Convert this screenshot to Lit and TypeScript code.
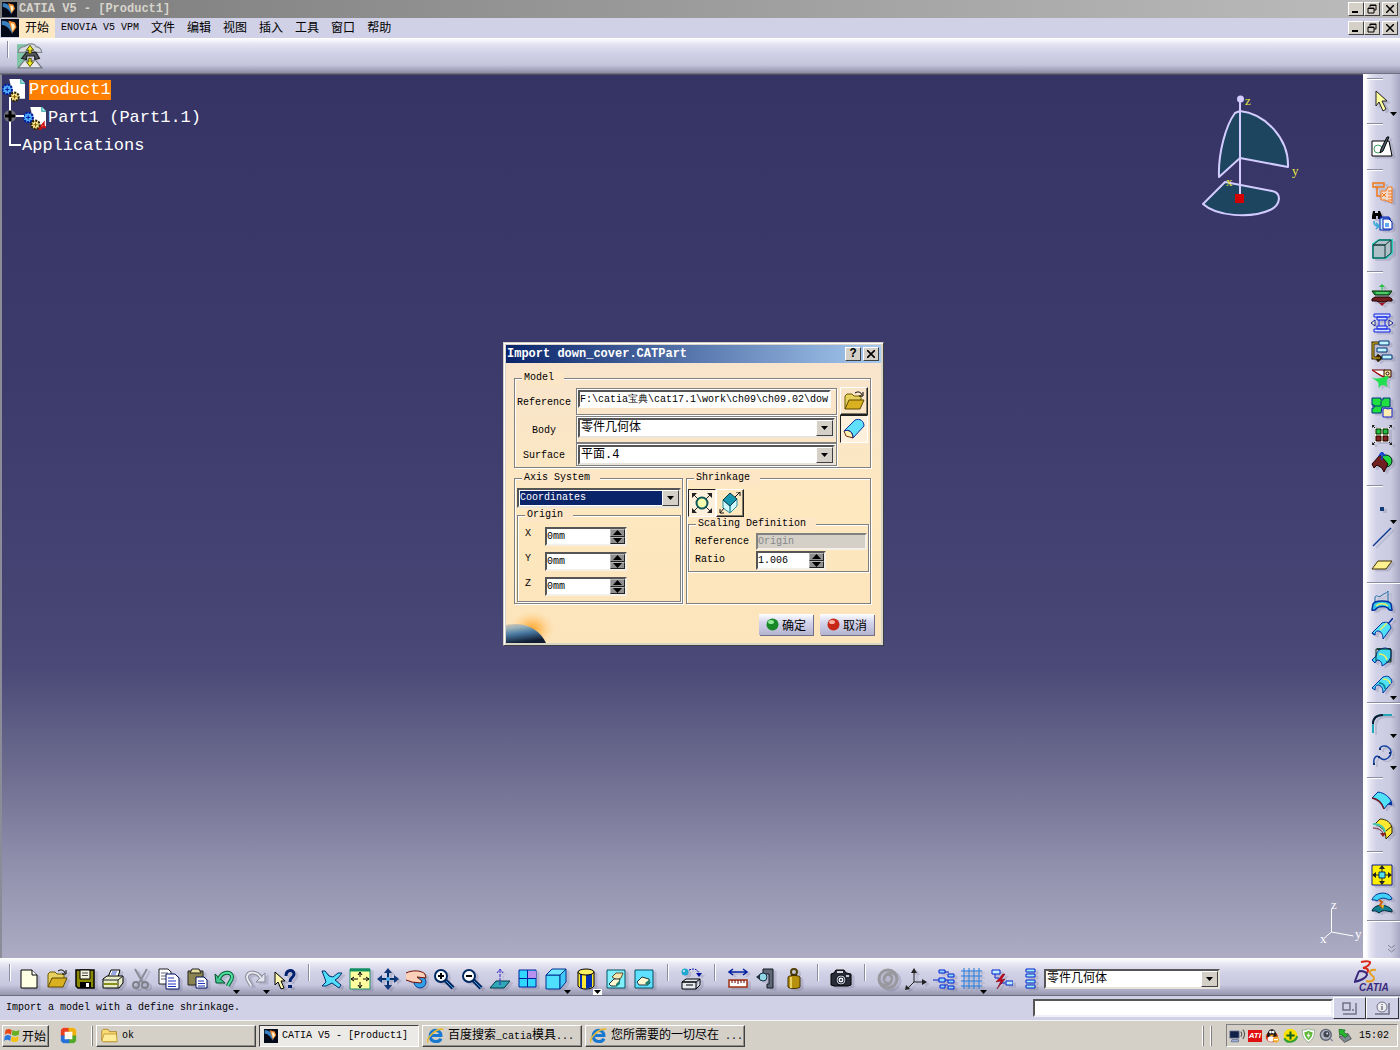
import { LitElement, html, svg, css } from "lit";
import { customElement, property } from "lit/decorators.js";

type Glyph = ReturnType<typeof svg>;

/* 22 x 22 pictograms, keyed by command */
const glyphs: Record<string, Glyph> = {
  page: svg`<path d="M3 2h11l5 5v13H3z" fill="#ffffe6" stroke="#000" stroke-width="1"/><path d="M14 2v5h5" fill="#fff" stroke="#000"/>`,
  open: svg`<path d="M2 19V6l2-2h5l2 2h7v4" fill="#e8d060" stroke="#6b5a00"/><path d="M2 19l4-9h15l-4 9z" fill="#d8b020" stroke="#5c4800"/><path d="M12 3c3-2 6-1 7 2m1-3v4h-4" fill="none" stroke="#000"/>`,
  save: svg`<path d="M2 2h18v18H4l-2-2z" fill="#8a8a00" stroke="#000" stroke-width="1.5"/><path d="M6 2h10v9H6z" fill="#f4f4dc" stroke="#000"/><path d="M6 14h11v6H6z" fill="#000"/><path d="M12 15h3v4h-3z" fill="#fff"/><path d="M8 5h6M8 7.500h6" stroke="#444"/>`,
  print: svg`<path d="M6 9l3-7h9l-2 7" fill="#fff" stroke="#000"/><path d="M10 4h5M9 6h5" stroke="#3050d0"/><path d="M1 11l4-3h16v7l-4 5H1z" fill="#e8ecc8" stroke="#000"/><path d="M1 12h15l5-4M16 12v8" fill="none" stroke="#222"/><path d="M2 16h14" stroke="#88901a" stroke-width="2"/>`,
  cut: svg`<path d="M5 1l8 14M17 1L9 15" stroke="#8c8c98" stroke-width="2" fill="none"/><circle cx="6" cy="17" r="3" fill="none" stroke="#808088" stroke-width="2"/><circle cx="15" cy="17" r="3" fill="none" stroke="#808088" stroke-width="2"/>`,
  copy: svg`<path d="M1 1h9l3 3v12H1z" fill="#fff" stroke="#222"/><path d="M3 5h7M3 8h7M3 11h5" stroke="#667"/><path d="M8 6h9l4 4v11H8z" fill="#fff" stroke="#001060"/><path d="M10 10h6M10 13h8M10 16h8M10 18.500h8" stroke="#2030c0"/>`,
  paste: svg`<path d="M2 3h15v14H2z" fill="#8a8450" stroke="#222"/><path d="M6 1h7l2 4H4z" fill="#e8e0a0" stroke="#222"/><path d="M10 9h8l3 3v8H10z" fill="#fff" stroke="#001060"/><path d="M12 13h6M12 15.500h7M12 18h7" stroke="#2030c0"/>`,
  undo: svg`<path d="M1 6l1 9h9z" fill="#40c890" stroke="#055028"/><path d="M5 11C8 3 18 3 18 9c0 4-3 5-4 9" fill="none" stroke="#066038" stroke-width="4"/><path d="M5 11C8 3 18 3 18 9c0 4-3 5-4 9" fill="none" stroke="#50e0a0" stroke-width="2"/>`,
  redo: svg`<path d="M21 5v9h-9z" fill="#e4e4ee" stroke="#888896"/><path d="M17 10C13 3 4 3 3 9c0 4 3 5 4 9" fill="none" stroke="#888896" stroke-width="4"/><path d="M17 10C13 3 4 3 3 9c0 4 3 5 4 9" fill="none" stroke="#e8e8f0" stroke-width="2"/>`,
  help: svg`<path d="M1 4l10 9H7l3 7-3 1-3-7-3 3z" fill="#fff8b0" stroke="#000"/><path d="M12 8c0-7 8-7 8-2 0 4-4 3-4 8" fill="none" stroke="#002070" stroke-width="3"/><path d="M14 17h4v3h-4z" fill="#002070"/>`,
  fly: svg`<path d="M1 3h3l4 5 4 1 5-4h4l-4 5-3 2 6 5-2 3-7-5-6 3H1l4-4-1-3z" fill="#50e0f8" stroke="#003070"/>`,
  fit: svg`<path d="M1 1h20v20H1z" fill="#ffffa0" stroke="#209070" stroke-width="1"/><path d="M1 2h20" stroke="#109060" stroke-width="3"/><path d="M11 4v5M11 14v5M3 11h6M14 11h6M9 7l2-3 2 3M9 17l2 3 2-3M5 9l-3 2 3 2M17 9l3 2-3 2" fill="none" stroke="#000"/>`,
  pan: svg`<path d="M11 3v16M3 11h16" stroke="#003070" stroke-width="2"/><path d="M11 0l4 5H7zM11 22l4-5H7zM0 11l5-4v8zM22 11l-5-4v8z" fill="#103878"/><circle cx="11" cy="11" r="2" fill="#50b0f0"/>`,
  rotate: svg`<circle cx="15" cy="14" r="6" fill="#30a0e8" stroke="#0a3a90"/><path d="M1 5c6-3 15-3 19 1l1 4-9-1 5 4-1 2-9-1-6-2" fill="#fbd0b8" stroke="#6a1008"/>`,
  zoomin: svg`<path d="M12 12l8 8" stroke="#002860" stroke-width="4"/><path d="M13 13l7 7" stroke="#40a0e0" stroke-width="1"/><circle cx="8" cy="8" r="6" fill="#fff" stroke="#002860" stroke-width="2"/><path d="M5 8h6M8 5v6" stroke="#000" stroke-width="2"/>`,
  zoomout: svg`<path d="M12 12l8 8" stroke="#002860" stroke-width="4"/><path d="M13 13l7 7" stroke="#40a0e0" stroke-width="1"/><circle cx="8" cy="8" r="6" fill="#fff" stroke="#002860" stroke-width="2"/><path d="M5 8h6" stroke="#000" stroke-width="2"/>`,
  normal: svg`<path d="M1 20l6-7h14l-6 7z" fill="#30a8b8" stroke="#003848"/><path d="M11 17V2M8 5l3-4 3 4" fill="none" stroke="#3020c0" stroke-dasharray="3 1"/>`,
  multi: svg`<path d="M2 2h17v17H2z" fill="#30d8ff" stroke="#0020a0"/><path d="M11 3h8v8h-8z" fill="#b890f0"/><path d="M10.500 2v17M2 10.500h17" stroke="#0020a0"/>`,
  iso: svg`<path d="M1 7h14v14H1z" fill="#50e0ff" stroke="#003090"/><path d="M1 7l6-6h14l-6 6z" fill="#70e8ff" stroke="#003090"/><path d="M15 7l6-6v13l-6 7z" fill="#40c8f8" stroke="#003090"/>`,
  cyl: svg`<path d="M3 4v14c2 4 14 4 16 0V4z" fill="#ffe830" stroke="#000"/><path d="M11 6h6v13l-6 2z" fill="#0030b0"/><path d="M6 6v14" stroke="#0030b0" stroke-width="2"/><ellipse cx="11" cy="4" rx="8" ry="3" fill="#f8f060" stroke="#000"/>`,
  hide: svg`<path d="M2 2h18v18H2z" fill="#80f0ff" stroke="#005060" stroke-width="1"/><path d="M7 9l4-4h7l-2 5-4 2z" fill="#f4e8b0" stroke="#605020"/><path d="M4 16l5-5h6l-1 4-3 3H6z" fill="#fff8d0" stroke="#203040"/><path d="M11 16l4-4v4l-4 3z" fill="#208070"/>`,
  swap: svg`<path d="M2 2h18v18H2z" fill="#60e0ff" stroke="#005060" stroke-width="1"/><path d="M4 14l5-5 7 2 1 4-3 2H6z" fill="#fff8d0" stroke="#203040"/><path d="M12 15l5-4v4l-3 3z" fill="#208070"/>`,
  catalog: svg`<path d="M2 14h14v7H2zM2 14l4-3h14l-4 3zM16 21l4-4v-6M6 17h7" fill="#e4e8f0" stroke="#000"/><circle cx="5" cy="4" r="3.500" fill="#20a8d0"/><circle cx="4" cy="3" r="1" fill="#d8f8ff"/><path d="M9 2c5-2 9-1 10 4" fill="none" stroke="#0010a0" stroke-dasharray="2 1"/><path d="M16 5h6l-3 4z" fill="#0010a0"/>`,
  measure: svg`<path d="M2 4h18M6 1L2 4l4 3M16 1l4 3-4 3" fill="none" stroke="#0020a0" stroke-width="1.500"/><path d="M2 12h18v7H2z" fill="#fff" stroke="#a03010" stroke-width="1.500"/><path d="M5 12v3M8 12v3M11 12v4M14 12v3M17 12v3" stroke="#600"/>`,
  caliper: svg`<path d="M8 1h10v19h-6v-4h2V6H8z" fill="#606878" stroke="#101820"/><circle cx="8" cy="9" r="4" fill="#90d8e8" stroke="#103040"/><path d="M1 9l4-3v6z" fill="#203040"/>`,
  weight: svg`<circle cx="11" cy="4" r="3" fill="none" stroke="#504000" stroke-width="2"/><path d="M5 9c1-2 11-2 12 0v10c-2 2-10 2-12 0z" fill="#b89010" stroke="#403000"/><path d="M8 9v11" stroke="#e8d060" stroke-width="2"/><path d="M8 6h6v2H8z" fill="#403000"/>`,
  camera: svg`<path d="M1 6l3-1 2-3h8l2 3 5 1v11l-3 1H4l-3-1z" fill="#282c38" stroke="#000"/><path d="M7 3h6v2H7z" fill="#d0d4e0"/><circle cx="11" cy="12" r="5" fill="#c0cce0" stroke="#000"/><circle cx="11" cy="12" r="3" fill="#f0f4ff" stroke="#222"/><circle cx="11" cy="12" r="1" fill="#223"/><path d="M16 7h3v2h-3z" fill="#c0c8d8"/>`,
  swirl: svg`<circle cx="11" cy="11" r="9" fill="none" stroke="#98989e" stroke-width="3"/><path d="M20 11c0-8-13-8-13 0 0 6 8 5 7 0M2 11c0 8 13 8 13 0 0-6-8-5-7 0" fill="none" stroke="#98989e" stroke-width="2.500"/>`,
  axes: svg`<path d="M9 3v11h11M9 14l-7 7" fill="none" stroke="#222" stroke-width="1"/><path d="M9 0l3 5H6zM22 14l-5-3v6zM0 22l1-5 4 4z" fill="#222"/>`,
  nodes: svg`<path d="M0 12h6M11 4h5M12 17h3M12 12h3" stroke="#0020c0"/><path d="M6 2h6v3H6zM15 6h6v3h-6zM6 10h6v4H6zM15 12h6v3h-6zM7 17h5v3H7zM15 18h6v3h-6z" fill="#90d8ff" stroke="#0020d0"/>`,
  grid: svg`<path d="M3 0v21M8 0v21M13 0v21M18 0v21M0 3h21M0 8h21M0 13h21M0 18h21" stroke="#2078d8" stroke-width="1"/>`,
  linkcut: svg`<path d="M1 2h8v4H1zM15 13h7v4h-7z" fill="#c0f0ff" stroke="#0020d0"/><path d="M4 6v4h4M14 15h-4" stroke="#0020d0" fill="none"/><path d="M12 6l-7 8 5-1-4 8 8-10-4 1 4-6z" fill="#d00020" stroke="#600010" stroke-width=".5"/>`,
  stack: svg`<path d="M7 1h9v3H7zM7 6h9v3H7zM7 12h9v3H7zM7 17h9v3H7z" fill="#a0f0f0" stroke="#0020d0"/>`,

  arrow: svg`<path d="M5 1l11 10h-5l4 8-3 2-4-9-3 4z" fill="#ffffa0" stroke="#222"/>`,
  sketch: svg`<path d="M1 5h17l3 15H1z" fill="#fff" stroke="#000"/><circle cx="7" cy="13" r="4" fill="none" stroke="#40a060"/><path d="M18 1l-6 14-3 2 1-4 6-12z" fill="#506070" stroke="#000"/>`,
  otree: svg`<path d="M2 1h11v4H2zM6 5v9h4" fill="none" stroke="#f07818" stroke-width="1.500"/><path d="M10 9h5l2-4h4v16l-7-3h-4z" fill="#f4d8c8" stroke="#f07818"/><path d="M11 11l4 4m0-4l-4 4M17 9h4m-4 3h4m-4 3h4m-4 3h4" stroke="#f07818"/>`,
  find: svg`<path d="M1 6l1-5h2v2h3V1h2l2 5v3H7V6H5v3H1z" fill="#000"/><path d="M9 7h9v2M9 8h10v12H9z" fill="#c8e8ff" stroke="#0020b0"/><path d="M12 9h6l3 3v7h-9z" fill="#fff" stroke="#0020b0"/><path d="M14 13h4v4h-4z" fill="#60a8f0"/><path d="M3 11c0 4 1 5 5 5M5 13l3 3-3 3" fill="none" stroke="#30a8d8" stroke-width="1.500"/>`,
  cube: svg`<path d="M2 6l6-4h13v13l-6 5H2z" fill="#b0c0c8" stroke="#30d0c0" stroke-width="2"/><path d="M2 7h12v13H2zM2 7l6-5h12l-6 5zM14 20l6-5V2" fill="none" stroke="#103838"/>`,
  split: svg`<path d="M1 7h20l-3 4H4z" fill="#20a040" stroke="#002800"/><path d="M5 9h12" stroke="#80f090"/><path d="M4 13h14l3 2v2h-5l-1 1H7l-1-1H1v-2z" fill="#702020" stroke="#200000"/><path d="M11 7V2" stroke="#20c040"/><path d="M8 3l3-3 3 3z" fill="#20c040"/><path d="M8 19l3 3 3-3z" fill="#a01020"/>`,
  press: svg`<path d="M3 2h16v3H3zM6 5h10v3H6zM6 14h10v3H6zM3 17h16v3H3z" fill="#d4e0ff" stroke="#1020e0"/><path d="M0 11l4-3v6zM22 11l-4-3v6z" fill="#fff8c0" stroke="#1020a0"/><path d="M8 8v6M14 8v6" stroke="#1020e0"/>`,
  order: svg`<path d="M8 3H2v15h6M6 15l4 3-4 3" fill="none" stroke="#302000" stroke-width="3"/><path d="M8 3H2v15h7" fill="none" stroke="#e8c820" stroke-width="1"/><path d="M8 1h10v4H8zM6 8h10v4H6zM11 15h10v4H11z" fill="#c0f4ff" stroke="#003070"/>`,
  parting: svg`<path d="M1 2h13v7l-4-1z" fill="#fff" stroke="#600"/><path d="M13 2h7v7h-7z" fill="#f4e890" stroke="#300"/><circle cx="16.500" cy="5.500" r="1.500" fill="#fff" stroke="#300"/><path d="M0 9c6 3 10 1 15-1l3 1c-3 3-3 7-1 11-3-4-8-4-9 1-1-4 0-6-1-7z" fill="#20e050"/><path d="M1 2l12 7" stroke="#c00000"/>`,
  blocks: svg`<path d="M1 2h9v2h2V2h7v9h-8l-1 6H1v-5h2V9H1z" fill="#20e040" stroke="#003080"/><path d="M1 10h9V5" fill="none" stroke="#003080"/><path d="M12 13l2-1 3 1 4-1v9h-9z" fill="#fff0b0" stroke="#1020d0"/>`,
  explode: svg`<path d="M1 1l4 4M21 1l-4 4M1 21l4-4M21 21l-4-4" stroke="#222"/><path d="M1 1h3L1 4zM21 1v3l-3-3zM1 21v-3l3 3zM21 21h-3l3-3z" fill="#222"/><path d="M4 4h14v14H4z" fill="#f4f8d8"/><path d="M5 5h5v5H5zM12 5h5v5h-5z" fill="#20c040" stroke="#002000"/><path d="M5 12h5v5H5zM12 12h5v5h-5z" fill="#802020" stroke="#200"/>`,
  mirror: svg`<circle cx="15" cy="9" r="6" fill="#20d840" stroke="#002010"/><path d="M1 12L9 3l8 9-4 8-2-4-5-3-3 3z" fill="#702020" stroke="#200"/><path d="M11 8V1M8 4l3-4 3 4" fill="none" stroke="#1040d0" stroke-width="1.500"/>`,
  point: svg`<path d="M9 9h4v4H9z" fill="#103c78"/>`,
  line: svg`<path d="M2 20L20 2" stroke="#103c90" stroke-width="1.500"/>`,
  plane: svg`<path d="M1 15l6-8h14l-6 8z" fill="#fff090" stroke="#403000"/>`,
  extrude: svg`<path d="M4 12V7c2-3 3 1 6-1 3-3 5-2 7-5v10" fill="none" stroke="#2070a0"/><path d="M2 14c2-4 16-4 18 0l1 6c-3 1-4-2-4-2-3-2-8-2-11 0 0 0-2 3-5 2z" fill="#30c8e8" stroke="#0030a0" stroke-width="1.500"/><path d="M5 16c3-3 9-3 12 0" fill="none" stroke="#f0f060" stroke-width="1.500"/>`,
  sweep: svg`<path d="M1 15L11 5c5-2 8 0 9 5l-8 11c0-5-2-8-5-8-2 0-3 1-3 4z" fill="#50e0f8" stroke="#0030a0"/><path d="M1 15l3 2M17 6l5-6" stroke="#0030a0" stroke-width="1.500"/><path d="M9 12l7-7" stroke="#e8f060" stroke-width="1.500"/>`,
  fill: svg`<path d="M6 3h13v12" fill="#208898" stroke="#083020" stroke-width="1.500"/><path d="M1 14l4-4C6 5 9 2 15 2l5 2v7l-3 5-6 4c0-4-2-6-5-6l-2 3z" fill="#40d8f0" stroke="#0028a0"/><path d="M5 3v12M5 3h15v13h-5" fill="none" stroke="#083020"/><path d="M8 8c4 0 7 2 8 6" fill="none" stroke="#f0f060" stroke-width="1.500"/>`,
  blend: svg`<path d="M1 14L12 3c5-2 8 0 9 5l-9 11c0-5-2-8-5-8-2 0-3 2-3 5z" fill="#50e0f8" stroke="#0030a0"/><path d="M8 9c3 0 6 2 6 6" fill="none" stroke="#108898" stroke-width="2"/><path d="M12 5c4 0 7 2 7 5" fill="none" stroke="#e8f060" stroke-width="1.500"/>`,
  corner: svg`<path d="M2 21v-9C2 6 6 3 12 3h9" fill="none" stroke="#20a8b8" stroke-width="2"/><path d="M2 12C2 6 6 3 12 3" fill="none" stroke="#101830" stroke-width="2"/>`,
  spline: svg`<path d="M3 20c-1-6 2-9 5-7s5 4 9 1c5-4 3-9 0-11s-8-1-8 2" fill="none" stroke="#1040a0" stroke-width="1.500"/><path d="M2 19h2v2H2zM7 12h2v2H7zM18 8h2v2h-2zM8 4h2v2H8z" fill="#103070"/>`,
  join: svg`<path d="M1 8l6-6c7 1 11 5 13 9l1 4-4-1-4 5C11 13 7 9 1 8z" fill="#50e0f8" stroke="#0030a0"/><path d="M1 8c6 1 10 5 12 11" fill="none" stroke="#701820" stroke-width="1.500"/><path d="M17 14l4 1-1-4z" fill="#0030a0"/>`,
  offset: svg`<path d="M4 6l5-5c7 0 11 4 12 9v5l-6 6c0-8-4-12-11-15z" fill="#ffe830" stroke="#302800"/><path d="M15 13l6-5" stroke="#302800"/><path d="M2 6c7 0 11 3 12 8" fill="none" stroke="#40c8b0" stroke-width="2"/><path d="M2 10c5 0 9 2 10 6" fill="none" stroke="#701820"/><path d="M9 15h6l-3 4z" fill="#902020"/>`,
  move: svg`<path d="M1 1h20v20H1z" fill="#fff000" stroke="#101890" stroke-width="1"/><path d="M8 8h6v6H8z" fill="#50e0f0" stroke="#003060"/><path d="M11 1l3 4H8zM11 21l3-4H8zM1 11l4-3v6zM21 11l-4-3v6z" fill="#222"/><path d="M11 4v4M11 14v4M4 11h4M14 11h4" stroke="#222"/>`,
  swapsurf: svg`<path d="M1 8c2-8 17-10 20-1l-3 1c-5-3-9-2-12 1l-2-1z" fill="#40d0f8" stroke="#003090"/><path d="M1 19c2-8 16-7 20-1v2l-5-1c-3-1-6 0-8 2l-3-2z" fill="#108090" stroke="#002840"/><path d="M8 8l3 2-2 3 3 3" fill="none" stroke="#d06010" stroke-width="2"/><path d="M10 13h3l-1 4z" fill="#f0c020"/>`,

  plant: svg`<path d="M0 1h9v20H0z" fill="#80c4a8"/><path d="M1 8c0-3 3-5 5-5l4-2c4-1 6 1 6 2 3 0 5 3 5 5h-5l-3-2H9L6 8z" fill="#d8dce0" stroke="#808890"/><path d="M4 13l4-5h8l3 5-4 1v-3H8v3z" fill="#505860" stroke="#222"/><path d="M1 21l5-6h10l5 6z" fill="#e8e8ec" stroke="#707880"/><path d="M11 2l3 4h-2v3h-2V6H8zM11 20l3-4h-2v-3h-2v3H8z" fill="#f0f020" stroke="#504800" stroke-width=".8"/>`,
  surface: svg`<path d="M1 13L12 2c5-2 9 1 9 6L10 20z" fill="#60e0ff" stroke="#1030a0"/><path d="M1 13c5-2 9 1 9 7l-7-2z" fill="#fff0b0" stroke="#703010"/><path d="M1 13c5-2 9 1 9 7" fill="none" stroke="#1030a0"/>`,
  scale: svg`<path d="M2 2l18 18M20 2L2 20" stroke="#222"/><path d="M1 1h5L1 6zM21 1v5l-5-5zM1 21v-5l5 5zM21 21h-5l5-5z" fill="#222"/><circle cx="11" cy="11" r="5.500" fill="#f4ffb0" stroke="#105858" stroke-width="2"/>`,
  affinity: svg`<path d="M4 8l7 6v7l-7-5zM11 21l7-7V7l-7 7z" fill="#d0f8ff" stroke="#3090a0"/><path d="M4 8l7-7 7 6-7 7z" fill="#1898b0" stroke="#083848"/><path d="M16 5l5-5M17 0h4v4M5 16l-4 5M1 17v4h4" fill="none" stroke="#111"/>`,

  gears: svg`<path d="M7 0h11l4 4v15H11z" fill="#fff"/><path d="M18 0v4h4" fill="#b0f0f0" stroke="#20a0a0"/><circle cx="5" cy="10" r="4.500" fill="#50b0ff" stroke="#0020a0" stroke-width="2" stroke-dasharray="2 1"/><path d="M3 10h4M5 8v4" stroke="#0020a0"/><circle cx="12" cy="17" r="4" fill="#ffe890" stroke="#302800" stroke-width="2" stroke-dasharray="2 1"/><path d="M10 17h4M12 15v4" stroke="#806000"/>`,
  part: svg`<path d="M7 0h11l4 4v15H11z" fill="#fff"/><path d="M18 0v4h4" fill="#b0f0f0" stroke="#20a0a0"/><path d="M15 21l5-6v3l2 2-3-1-2 2z" fill="none" stroke="#d01010" stroke-width="1.500"/><circle cx="5" cy="10" r="4.500" fill="#50b0ff" stroke="#0020a0" stroke-width="2" stroke-dasharray="2 1"/><path d="M3 10h4M5 8v4" stroke="#0020a0"/><circle cx="12" cy="17" r="4" fill="#ffe890" stroke="#302800" stroke-width="2" stroke-dasharray="2 1"/><path d="M10 17h4M12 15v4" stroke="#806000"/>`,
  app: svg`<path d="M0 0h22v22H0z" fill="#050a18"/><path d="M1 2c8 0 11 4 12 8l1 9C11 12 7 8 1 7z" fill="#3880c0"/><path d="M9 2l8 2 2 6-5 7-2-6z" fill="#f08828"/><path d="M12 5l4 1 1 4-3 5-1-5z" fill="#fff0c8"/>`,
  folder: svg`<path d="M1 5l2-2h6l2 3h9v13H3l-2-2z" fill="#f8dc78" stroke="#a87810"/><path d="M1 18l3-9h16l1 10H3z" fill="#ffec98" stroke="#b88820"/>`,
  ie: svg`<path d="M18 15c-2 5-13 6-14-3C4 2 18 2 18 11H6" fill="none" stroke="#1878d0" stroke-width="4"/><path d="M1 20C-1 14 12 1 21 3" fill="none" stroke="#e8b830" stroke-width="2"/>`,
  flag: svg`<path d="M2 4c3-2 5-2 8 0L9 10c-3-2-5-2-8 0z" fill="#e84818"/><path d="M11 4c3 2 6 2 9 0l-1 6c-3 2-6 2-9 0z" fill="#68b020"/><path d="M1 12c3-2 5-2 8 0l-1 6c-3-2-5-2-8 0z" fill="#2878e0"/><path d="M10 12c3 2 6 2 9 0l-1 6c-3 2-6 2-9 0z" fill="#f8c010"/>`,
  office: svg`<path d="M4 1h14l3 3v14l-3 3H4l-3-3V4z" fill="#fff"/><path d="M1 4l3-3h8v5H6v6H1z" fill="#e84020"/><path d="M11 1h7l3 3v8h-5V6h-5z" fill="#f0b010"/><path d="M21 11v7l-3 3h-8v-5h6v-5z" fill="#50a828"/><path d="M1 11v7l3 3h8v-5H6v-5z" fill="#2870d8"/><path d="M7 7h8v8H7z" fill="#fff8e8"/>`,
  net: svg`<path d="M1 4h13v10H1z" fill="#102048" stroke="#8890a8"/><path d="M4 16h9v3H3z" fill="#a8b4d8" stroke="#506090"/><path d="M16 5c2 2 2 5 0 7M19 2c3 4 3 9 0 13" fill="none" stroke="#555" stroke-width="1.500"/>`,
  qq: svg`<ellipse cx="10" cy="13" rx="9" ry="8" fill="#d83818"/><path d="M3 13c0-15 14-15 14 0z" fill="#181818"/><ellipse cx="8" cy="6" rx="2" ry="2" fill="#fff"/><ellipse cx="12" cy="6" rx="2" ry="2" fill="#fff"/><path d="M6 10h8l-4 3z" fill="#f8a010"/><ellipse cx="9" cy="16" rx="5" ry="4" fill="#fff"/><circle cx="16" cy="17" r="4.500" fill="#f8a828"/><path d="M13 17h6" stroke="#fff" stroke-width="2"/>`,
  safe: svg`<circle cx="11" cy="11" r="10" fill="#f8e000"/><path d="M2 15c3 7 15 8 19-3" fill="none" stroke="#30a030" stroke-width="3"/><path d="M11 5v12M5 11h12" stroke="#106020" stroke-width="3"/>`,
  shield: svg`<path d="M11 1c3 2 6 2 9 2 0 8-2 14-9 18C4 17 2 11 2 3c3 0 6 0 9-2z" fill="#fff" stroke="#789878"/><path d="M11 4c2 1 4 2 6 2 0 6-2 9-6 12-4-3-6-6-6-12 2 0 4-1 6-2z" fill="#60b838"/><path d="M12 6l-4 6h3l-1 4 4-6h-3z" fill="#fff"/>`,
  sound: svg`<circle cx="10" cy="10" r="8" fill="#b0b4c0" stroke="#606470" stroke-width="2"/><circle cx="11" cy="9" r="4.500" fill="#404450"/><circle cx="12" cy="8" r="1.500" fill="#d8dce8"/><path d="M17 16l3 3" stroke="#8084a0" stroke-width="2"/>`,
  eject: svg`<path d="M3 13l13-5 5 8-10 5z" fill="#808890" stroke="#303840"/><path d="M3 2l9 1-2 3 6 5-4 3-6-5-2 2z" fill="#28b830" stroke="#086010"/>`,
};

interface Tool { glyph: string; label: string; menu?: boolean; white?: boolean }
const t = (glyph: string, label: string, menu = false, white = false): Tool => ({ glyph, label, menu, white });

const bottomTools: Tool[][] = [
  [t("page", "New"), t("open", "Open"), t("save", "Save"), t("print", "Print"), t("cut", "Cut"), t("copy", "Copy"), t("paste", "Paste"), t("undo", "Undo", true), t("redo", "Redo", true), t("help", "What's This?")],
  [t("fly", "Fly Mode"), t("fit", "Fit All In"), t("pan", "Pan"), t("rotate", "Rotate"), t("zoomin", "Zoom In"), t("zoomout", "Zoom Out"), t("normal", "Normal View"), t("multi", "Multi-View"), t("iso", "Isometric View", true), t("cyl", "View Mode", true, true), t("hide", "Hide/Show"), t("swap", "Swap Visible Space")],
  [t("catalog", "Catalog")],
  [t("measure", "Measure Between"), t("caliper", "Measure Item"), t("weight", "Measure Inertia")],
  [t("camera", "Capture")],
  [t("swirl", "Update"), t("axes", "Axis System"), t("nodes", "Graph"), t("grid", "Grid", true), t("linkcut", "Isolate"), t("stack", "Stack")],
];

const sideTools: { end: "short" | "full"; loose?: boolean; tools: Tool[] }[] = [
  { end: "short", tools: [t("arrow", "Select", true)] },
  { end: "short", tools: [t("sketch", "Sketcher")] },
  { end: "short", tools: [t("otree", "Structure"), t("find", "Search"), t("cube", "Bounding Box")] },
  { end: "short", tools: [t("split", "Pulling Direction"), t("press", "Slider Direction"), t("order", "Transfer"), t("parting", "Parting Line"), t("blocks", "Aggregate"), t("explode", "Explode View"), t("mirror", "Faces to Keep")] },
  { end: "full", tools: [t("point", "Point", true), t("line", "Line"), t("plane", "Plane")] },
  { end: "full", tools: [t("extrude", "Extrude"), t("sweep", "Sweep"), t("fill", "Fill"), t("blend", "Blend", true)] },
  { end: "short", loose: true, tools: [t("corner", "Corner", true), t("spline", "Spline", true)] },
  { end: "short", tools: [t("join", "Join"), t("offset", "Offset")] },
  { end: "full", tools: [t("move", "Translate"), t("swapsurf", "Swap")] },
];

/* Latin text is set smaller than the Chinese text beside it */
const mixed = (text: string) =>
  text.split(/([\u4e00-\u9fff]+)/).filter(Boolean).map((part) =>
    /[\u4e00-\u9fff]/.test(part) ? html`<span class="cjk">${part}</span>` : part);

const base = css`
  * { box-sizing: border-box; }
  .cjk { font-family: "Noto Sans CJK SC", sans-serif; font-size: 12px; }
  button, input, select { font: inherit; color: inherit; margin: 0; padding: 0; border-radius: 0; }
  button { border: 0; background: none; }
  .glyph { display: block; flex: none; }
`;

const draw = (name: string, size = 22) => html`<svg class="glyph" width=${size} height=${size} viewBox="0 0 22 22" aria-hidden="true">${glyphs[name]}</svg>`;

@customElement("tool-button")
class ToolButton extends LitElement {
  static styles = [base, css`
    :host { display: block; position: relative; flex: none; }
    .tool { display: flex; align-items: center; justify-content: center; width: 28px; height: 28px; }
    .tool .glyph { filter: drop-shadow(3px 2px 0 rgba(90, 90, 120, 0.2)); }
    .more { position: absolute; right: -2px; bottom: -2px; width: 9px; height: 6px; display: flex; justify-content: center; }
    .more.white { background: #fff; }
  `];
  @property({ attribute: false }) tool!: Tool;
  render() {
    return html`<button class="tool" aria-label=${this.tool.label}>${draw(this.tool.glyph)}</button>
      ${this.tool.menu ? html`<svg class="more ${this.tool.white ? "white" : ""}" viewBox="0 0 9 6" aria-hidden="true"><path d="M1 1h7L4.500 5z" fill="#000"/></svg>` : ""}`;
  }
}

@customElement("combo-box")
class ComboBox extends LitElement {
  static styles = [base, css`
    :host { display: block; }
    .box { display: grid; grid-template-columns: 1fr 17px; height: 20px; background: #fff; border: 2px solid; border-color: #555 #e8e4dc #e8e4dc #555; }
    select { grid-area: 1 / 1 / 2 / 3; appearance: none; border: 0; background: none; outline: 0; padding: 0 1px; font-family: "Liberation Mono", "Noto Sans CJK SC", monospace; font-size: 12px; line-height: 16px; width: 100%; min-width: 0; }
    .latin select { font-size: 10px; }
    .hot { background: linear-gradient(#0a246a, #0a246a) 1px 1px / calc(100% - 18px) 14px no-repeat #fff; color: #fff; }
    .arrow { grid-area: 1 / 2; pointer-events: none; display: flex; align-items: center; justify-content: center; background: #d4d0c8; border: 1px solid; border-color: #fff #404040 #404040 #fff; }
  `];
  @property() label = "";
  @property() value = "";
  @property({ type: Boolean }) hot = false;
  render() {
    return html`<div class="box ${this.hot ? "hot latin" : ""}">
      <select aria-label=${this.label}><option>${this.value}</option></select>
      <span class="arrow"><svg width="7" height="4" viewBox="0 0 7 4"><path d="M0 0h7L3.500 4z" fill="#000"/></svg></span>
    </div>`;
  }
}

@customElement("spin-box")
class SpinBox extends LitElement {
  static styles = [base, css`
    :host { display: block; }
    .box { display: flex; height: 19px; background: #fff; border: 2px solid; border-color: #555 #f4f0e8 #f4f0e8 #555; font: 10px/15px "Liberation Mono", monospace; }
    input { flex: 1; min-width: 0; border: 0; background: none; outline: 0; }
    .steps { display: grid; grid-template-rows: 1fr 1fr; width: 15px; background: #909090; }
    .steps button { display: flex; align-items: center; justify-content: center; border: 1px solid; border-color: #b8b8b8 #222 #222 #b8b8b8; min-height: 0; }
  `];
  @property() label = "";
  @property() value = "";
  render() {
    return html`<div class="box">
      <input type="text" aria-label=${this.label} .value=${this.value}>
      <div class="steps">
        <button aria-label="Increase"><svg width="9" height="5" viewBox="0 0 9 5"><path d="M0 5L4.500 0 9 5z"/></svg></button>
        <button aria-label="Decrease"><svg width="9" height="5" viewBox="0 0 9 5"><path d="M0 0L4.500 5 9 0z"/></svg></button>
      </div>
    </div>`;
  }
}

@customElement("import-dialog")
class ImportDialog extends LitElement {
  static styles = [base, css`
    :host { display: flex; flex-direction: column; padding: 2px; background: #d8d4c8; border: 1px solid; border-color: #d4d0c8 #404040 #404040 #d4d0c8; box-shadow: inset 1px 1px #fff; font: 10px/14px "Liberation Mono", monospace; color: #000; }
    .title { display: flex; align-items: center; gap: 2px; height: 18px; padding: 0 2px 0 1px; background: linear-gradient(90deg, #0a246a, #a6caf0); color: #fff; font-size: 12px; font-weight: bold; }
    .title h2 { flex: 1; margin: 0; font: inherit; white-space: pre; }
    .cap { width: 16px; height: 14px; display: flex; align-items: center; justify-content: center; background: #d4d0c8; border: 1px solid; border-color: #fff #404040 #404040 #fff; color: #000; font: bold 12px/12px "Liberation Mono", monospace; }
    .body { flex: 1; display: flex; flex-direction: column; gap: 3px; padding: 8px 10px 6px 8px; background: linear-gradient(#f8e4cc, #fde8c0 50%, #fce4bc); position: relative; }
    fieldset { margin: 0; padding: 0; min-width: 0; border: 1px solid #808080; box-shadow: 1px 1px #fff, inset 1px 1px #fff; }
    legend { margin-left: 7px; padding: 0 10px 0 2px; background: #fce6c6; }
    .model { display: grid; grid-template-columns: 58px 1fr 28px; column-gap: 3px; padding: 2px 2px 1px 0; align-items: center; }
    .model label { text-align: center; padding-top: 3px; }
    .frame { height: 27px; padding: 1px; border: 1px solid #808080; box-shadow: 1px 1px #fff, inset 1px 1px #fff; }
    .frame.low { height: 23px; }
    .path { display: block; width: calc(100% - 4px); height: 18px; border: 2px solid; border-color: #555 #fff #fff #555; background: #fff; outline: 0; }
    .face { width: 28px; height: 28px; display: flex; align-items: center; justify-content: center; border: 1px solid; border-color: #fff #222 #222 #fff; box-shadow: inset -1px -1px #807868; }
    .face.down { border-color: #222 #fff #fff #222; box-shadow: none; background: #fdf0dc; }
    .pair { display: grid; grid-template-columns: 169px 1fr; gap: 3px; height: 133px; align-items: stretch; }
    .pair > fieldset { display: flex; flex-direction: column; }
    .axis { flex: 1; display: flex; flex-direction: column; padding: 3px 1px 1px 2px; }
    .origin { flex: 1; }
    .origin .rows { display: grid; grid-template-columns: 20px 82px; row-gap: 6px; padding: 5px 0 0 7px; }
    .shrink { padding: 4px 1px 0; }
    .modes { display: flex; }
    .scaling .rows { display: grid; grid-template-columns: 61px 1fr; row-gap: 1px; padding: 2px 1px 1px 6px; }
    .scaling label { padding-top: 2px; }
    .fixed { width: 100%; height: 17px; padding: 0; border: 2px solid; border-color: #808080 #f4f0e8 #f4f0e8 #808080; background: #d4d0c8; color: #888; }
    .ratio { width: 70px; }
    .actions { display: flex; justify-content: flex-end; gap: 7px; margin: auto -3px 2px 0; }
    .act { display: flex; align-items: center; justify-content: center; gap: 3px; width: 54px; height: 21px; background: linear-gradient(#fff, #d4d4ec 40%, #b4b4d0); box-shadow: 1px 1px #707088; font: 12px/18px "Noto Sans CJK SC", sans-serif; }
    .planet { position: absolute; left: 0; bottom: 0; }
  `];
  render() {
    return html`
      <div class="title"><h2>Import down_cover.CATPart</h2>
        <button class="cap" aria-label="Help">?</button>
        <button class="cap" aria-label="Close"><svg width="8" height="8" viewBox="0 0 8 8"><path d="M0 0l8 8M8 0L0 8" stroke="#000" stroke-width="1.600"/></svg></button>
      </div>
      <div class="body">
        <svg class="planet" width="50" height="36" viewBox="0 0 50 36" aria-hidden="true">
          <defs>
            <radialGradient id="glow" cx="50%" cy="60%" r="50%"><stop offset="0" stop-color="#ffa830"/><stop offset=".4" stop-color="#ffc878"/><stop offset="1" stop-color="#fde4b8" stop-opacity="0"/></radialGradient>
            <linearGradient id="globe" x2=".3" y2="1"><stop offset="0" stop-color="#d8c8b0"/><stop offset=".25" stop-color="#98b0b8"/><stop offset=".55" stop-color="#4878a0"/><stop offset="1" stop-color="#101c30"/></linearGradient>
          </defs>
          <ellipse cx="26" cy="18" rx="25" ry="20" fill="url(#glow)"/><path d="M0 18c18-4 34 4 40 18H0z" fill="url(#globe)"/>
        </svg>
        <fieldset><legend>Model</legend>
          <div class="model">
            <label for="ref">Reference</label>
            <div class="frame"><input class="path" id="ref" type="text" .value=${"F:\\catia宝典\\cat17.1\\work\\ch09\\ch09.02\\dow"}></div>
            <button class="face" aria-label="Browse">${draw("open")}</button>
            <label>Body</label>
            <div class="frame"><combo-box label="Body" value="零件几何体"></combo-box></div>
            <button class="face down" aria-label="Surface selection">${draw("surface")}</button>
            <label>Surface</label>
            <div class="frame low"><combo-box label="Surface" value="平面.4"></combo-box></div>
          </div>
        </fieldset>
        <div class="pair">
          <fieldset><legend>Axis System</legend>
            <div class="axis">
              <combo-box label="Axis system" value="Coordinates" hot></combo-box>
              <fieldset class="origin"><legend>Origin</legend>
                <div class="rows">
                  ${["X", "Y", "Z"].map((axis) => html`<label>${axis}</label><spin-box label=${axis} value="0mm"></spin-box>`)}
                </div>
              </fieldset>
            </div>
          </fieldset>
          <fieldset><legend>Shrinkage</legend>
            <div class="shrink">
              <div class="modes">
                <button class="face down" aria-label="Scaling">${draw("scale")}</button>
                <button class="face" aria-label="Affinity">${draw("affinity")}</button>
              </div>
              <fieldset class="scaling"><legend>Scaling Definition</legend>
                <div class="rows">
                  <label for="sref">Reference</label><input class="fixed" id="sref" type="text" .value=${"Origin"} disabled>
                  <label>Ratio</label><spin-box class="ratio" label="Ratio" value="1.006"></spin-box>
                </div>
              </fieldset>
            </div>
          </fieldset>
        </div>
        <div class="actions">
          <button class="act"><svg width="13" height="13" viewBox="0 0 13 13"><circle cx="6.500" cy="6.500" r="6" fill="#188828"/><ellipse cx="5" cy="4" rx="3" ry="2" fill="#90e898"/></svg>确定</button>
          <button class="act"><svg width="13" height="13" viewBox="0 0 13 13"><circle cx="6.500" cy="6.500" r="6" fill="#c82818"/><ellipse cx="5" cy="4" rx="3" ry="2" fill="#f8b0a0"/></svg>取消</button>
        </div>
      </div>`;
  }
}

@customElement("app-root")
class AppRoot extends LitElement {
  static styles = [base, css`
    :host { display: flex; flex-direction: column; min-height: 100vh; background: #d0d0e6; font: 10px/14px "Liberation Mono", monospace; color: #000; overflow: hidden; }
    header { display: flex; align-items: center; height: 18px; padding: 0 2px; gap: 2px; background: linear-gradient(90deg, #7c7c7c, #bcbcbc); color: #d8d4cc; font-size: 12px; font-weight: bold; }
    h1 { margin: 0; flex: 1; font: inherit; white-space: pre; }
    .caps { display: flex; margin-left: auto; }
    .caps button { width: 16px; height: 14px; display: flex; align-items: center; justify-content: center; background: #d4d0c8; border: 1px solid; border-color: #fff #404040 #404040 #fff; }
    .caps button:last-child { margin-left: 2px; }
    .menu { display: flex; align-items: center; height: 20px; padding: 0 2px 0 1px; background: #d0d0e6; }
    .menu a { display: block; height: 20px; padding: 0 6px; line-height: 20px; color: #000; text-decoration: none; white-space: pre; }
    .menu a .cjk { line-height: 18px; }
    .menu a.on { background: #fde8c4; }
    .top { display: flex; align-items: center; height: 36px; padding: 0 5px; gap: 6px; background: linear-gradient(#fff, #e0e0f0 20%, #d0d0e6 45%, #c4c4dc 75%, #9090a8 96%, #606070); }
    .grip { flex: none; width: 2px; height: 17px; background: linear-gradient(90deg, #8c8ca0 50%, #fff 50%); align-self: flex-start; margin: 3px 2px; }
    .middle { flex: 1; display: flex; }
    main { flex: 1; position: relative; min-width: 0; border-left: 2px solid #8c8c98; border-top: 1px solid #505060; background: linear-gradient(#353465, #3c3b6b 35%, #454473 60%, #4a4977 67%, #6e6d90 79%, #9594b0 91%, #adacc4); color: #fff; }
    .tree { position: relative; list-style: none; margin: 0; padding: 1px 0 0; font-size: 17px; line-height: 20px; }
    .tree li { display: flex; align-items: center; height: 28px; gap: 2px; white-space: pre; }
    .tree .root { gap: 4px; }
    .tree .sub { padding-left: 21px; }
    .tree .leaf { padding-left: 20px; }
    .pick { background: #ff8000; }
    .lines { position: absolute; left: 0; top: 0; }
    .compass { position: absolute; right: 58px; top: 15px; }
    .axis { position: absolute; right: 0; bottom: 8px; }
    import-dialog { position: absolute; left: 501px; top: 267px; width: 381px; height: 304px; }
    .side { flex: none; display: flex; flex-direction: column; align-items: center; width: 37px; background: linear-gradient(90deg, #fff 3px, #e4e4f2 7px, #d0d0e6 14px, #cacae0 75%, #a8a8c4); }
    .group { display: flex; flex-direction: column; }
    .group.loose { gap: 4px; padding-top: 2px; }
    .mark { flex: none; width: 28px; height: 18px; padding: 8px 12px 0 0; align-self: flex-start; margin-left: 4px; }
    .mark.first { height: 13px; padding-top: 4px; }
    .mark::before, .full::before { content: ""; display: block; height: 2px; background: linear-gradient(#8c8ca0 50%, #fff 50%); }
    .full { flex: none; width: 100%; height: 8px; padding: 3px 0 0 4px; }
    .chev { margin: auto 5px 5px auto; }
    .bottom { flex: none; display: flex; align-items: center; height: 38px; padding: 0 6px 0 4px; background: linear-gradient(#fff, #e4e4f2 18%, #d0d0e6 40%, #c8c8e0 70%, #9898b0 96%, #585868); }
    .bar { display: flex; padding-top: 4px; }
    .bar .wide { margin-right: 2px; }
    .split { flex: none; display: flex; justify-content: center; width: 19px; align-self: stretch; }
    .lead { width: 11px; }
    .split .grip { margin-top: 6px; }
    .works { width: 176px; padding-top: 4px; }
    .logo { margin-left: auto; }
    .status { flex: none; display: flex; align-items: center; height: 24px; padding: 0 1px 0 6px; }
    .status span { flex: 1; white-space: pre; }
    .cmd { width: 300px; height: 18px; border: 2px solid; border-color: #555 #f0f0f8 #f0f0f8 #555; background: #fff; outline: 0; }
    .mini { display: flex; align-items: center; justify-content: center; width: 33px; height: 22px; border: 1px solid; border-color: #fff #333 #333 #fff; }
    .task { flex: none; display: flex; align-items: center; gap: 3px; height: 30px; padding: 0 2px; background: #d4d0c8; border-top: 1px solid #f4f4f8; }
    .task button { display: flex; align-items: center; gap: 4px; height: 22px; padding: 0 6px; background: #d4d0c8; border: 1px solid; border-color: #fff #404040 #404040 #fff; box-shadow: inset -1px -1px #909088; white-space: pre; text-align: left; }
    .task .start { width: 47px; padding: 0 1px; gap: 1px; }
    .task .quick { border: 0; box-shadow: none; width: 36px; padding: 0 8px; }
    .task .win { flex: 0 1 160px; min-width: 0; padding: 0 4px; }
    .task .on { background: #eceae6; border-color: #404040 #fff #fff #404040; box-shadow: none; }
    .vbar { width: 2px; height: 20px; background: linear-gradient(90deg, #fff 50%, #808080 50%); }
    .tray { display: flex; align-items: center; gap: 3px; height: 23px; padding: 0 8px 0 2px; border: 1px solid; border-color: #808080 #fff #fff #808080; }
    .tray time { margin-left: 4px; }
    .gripset { display: flex; gap: 6px; margin: 0 11px 0 auto; }
    .ati { background: #e01010; color: #fff; font: italic bold 8px/12px "Liberation Sans", sans-serif; padding: 0 1px; }
  `];

  private caps() {
    return html`<div class="caps">
      <button aria-label="Minimize"><svg width="10" height="10" viewBox="0 0 10 10"><path d="M1 7h6v2H1z"/></svg></button>
      <button aria-label="Restore"><svg width="10" height="10" viewBox="0 0 10 10"><path d="M3 3V1h6v5H7M3 1.500h6" fill="none" stroke="#000"/><path d="M1 4h6v5H1zM1 4.500h6" fill="none" stroke="#000"/></svg></button>
      <button aria-label="Close"><svg width="8" height="8" viewBox="0 0 8 8"><path d="M0 0l8 8M8 0L0 8" stroke="#000" stroke-width="1.500"/></svg></button>
    </div>`;
  }

  render() {
    const menus = ["开始", "ENOVIA V5 VPM", "文件", "编辑", "视图", "插入", "工具", "窗口", "帮助"];
    return html`
      <header>${draw("app", 15)}<h1>CATIA V5 - [Product1]</h1>${this.caps()}</header>
      <nav class="menu">${draw("app", 18)}
        ${menus.map((m, i) => html`<a href="#" class=${i ? "" : "on"}>${mixed(m)}</a>`)}${this.caps()}</nav>
      <div class="top"><span class="grip"></span>
        <button aria-label="Core and cavity design">${draw("plant", 26)}</button></div>
      <div class="middle">
        <main>
          <ul class="tree">
            <svg class="lines" width="24" height="84" aria-hidden="true"><path d="M8 22v48h11M8 41h14" fill="none" stroke="#fff" stroke-width="2"/><circle cx="8" cy="41" r="6" fill="#707078"/><path d="M3 41h10M8 36v10" stroke="#000" stroke-width="3"/></svg>
            <li class="root">${draw("gears", 23)}<span class="pick">Product1</span></li>
            <li class="sub">${draw("part", 23)}<span>Part1 (Part1.1)</span></li>
            <li class="leaf">Applications</li>
          </ul>
          <svg class="compass" width="108" height="130" viewBox="1197 90 108 130" aria-label="Compass">
            <g fill="#1d4560" stroke="#d4ccff" stroke-width="2" stroke-linejoin="round">
              <path d="M1240 111c26 3 49 28 48 56l-48-9-21 19c-1-24 7-52 16-64z"/>
              <path d="M1225 182l47 9c10 2 9 14-2 19-20 9-54 6-67-6z"/>
              <path d="M1240 100v98" fill="none"/></g>
            <circle cx="1240.500" cy="99" r="3.500" fill="#d4ccff"/>
            <path d="M1235 194h9v9h-9z" fill="#d40000"/>
            <g fill="#e8e840" font-family="Liberation Serif, serif" font-size="13"><text x="1245" y="105">z</text><text x="1292" y="175">y</text><text x="1226" y="186">x</text></g>
          </svg>
          <svg class="axis" width="46" height="56" viewBox="1317 894 46 56" aria-label="Axes">
            <path d="M1331.500 909v23l22 4M1331.500 932l-6 5" fill="none" stroke="#fff"/>
            <g fill="#fff" font-family="Liberation Serif, serif" font-size="13"><text x="1331" y="909">z</text><text x="1355" y="938">y</text><text x="1320" y="943">x</text></g>
          </svg>
          <import-dialog></import-dialog>
        </main>
        <aside class="side">
          <span class="mark first"></span>
          ${sideTools.map((g) => html`<div class="group ${g.loose ? "loose" : ""}">${g.tools.map((tool) => html`<tool-button .tool=${tool}></tool-button>`)}</div><span class=${g.end === "full" ? "full" : "mark"}></span>`)}
          <svg class="chev" width="7" height="8" viewBox="0 0 7 8" aria-hidden="true"><path d="M0 0l3.500 3L7 0M0 4l3.500 3L7 4" fill="none" stroke="#808098"/></svg>
        </aside>
      </div>
      <div class="bottom">
        <span class="split lead"><span class="grip"></span></span>
        ${bottomTools.map((g, i) => html`${i ? html`<span class="split"><span class="grip"></span></span>` : ""}<div class="bar">${g.map((tool) => html`<tool-button class=${tool.menu ? "wide" : ""} .tool=${tool}></tool-button>`)}</div>`)}
        <combo-box class="works" label="Work object" value="零件几何体"></combo-box>
        <svg class="logo" width="42" height="34" viewBox="0 0 42 34" aria-label="CATIA">
          <path d="M9 2c5-1 10-1 9 1-1 3-4 4-7 5 5 0 6 2 4 5" fill="none" stroke="#d82818" stroke-width="2"/>
          <path d="M7 11l-4 10M2 22c6-1 12-4 13-7 0-3-3-4-8-4" fill="none" stroke="#38287c" stroke-width="2"/>
          <path d="M24 10c-4-1-7 1-6 3 1 3 5 3 4 6-1 2-4 3-8 2" fill="none" stroke="#e8a020" stroke-width="2"/>
          <text x="7" y="31" font-family="Liberation Sans, sans-serif" font-style="italic" font-weight="bold" font-size="10" fill="#38287c">CATIA</text>
        </svg>
      </div>
      <div class="status"><span>Import a model with a define shrinkage.</span>
        <input class="cmd" type="text" aria-label="Power input">
        <button class="mini" aria-label="Input mode"><svg width="15" height="13" viewBox="0 0 15 13"><path d="M1 1h7v7H1zM10 8h2M14 1v11H1" fill="none" stroke="#707088" stroke-width="1.500"/></svg></button>
        <button class="mini" aria-label="Information"><svg width="17" height="14" viewBox="0 0 17 14"><circle cx="8" cy="6" r="5" fill="#eee" stroke="#707088"/><path d="M8 5v4M8 3v1M15 2v11H1" fill="none" stroke="#707088" stroke-width="1.500"/></svg></button>
      </div>
      <footer class="task">
        <button class="start">${draw("flag", 17)}${mixed("开始")}</button>
        <button class="quick" aria-label="Quick launch">${draw("office", 17)}</button>
        <span class="vbar"></span>
        <button class="win">${draw("folder", 17)}<span>ok</span></button>
        <button class="win on">${draw("app", 14)}<span>CATIA V5 - [Product1]</span></button>
        <button class="win">${draw("ie", 17)}<span>${mixed("百度搜索_catia模具...")}</span></button>
        <button class="win">${draw("ie", 17)}<span>${mixed("您所需要的一切尽在 ...")}</span></button>
        <span class="gripset"><span class="vbar"></span><span class="vbar"></span></span>
        <div class="tray">${draw("net", 16)}<span class="ati">ATI</span>${["qq", "safe", "shield", "sound", "eject"].map((n) => draw(n, 15))}<time>15:02</time></div>
      </footer>`;
  }
}
